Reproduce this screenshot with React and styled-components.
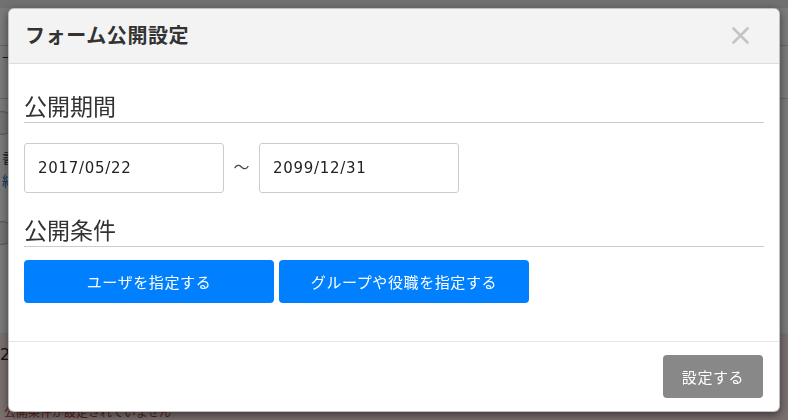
import React from 'react';
import styled, { createGlobalStyle } from 'styled-components';

const GlobalStyle = createGlobalStyle`
  html, body {
    margin: 0;
    padding: 0;
    height: 100%;
    overflow: hidden;
  }
  body {
    font-family: "DejaVu Sans", "Noto Sans CJK JP", sans-serif;
    color: #333;
  }
`;

/* page behind the modal */
const Page = styled.div`
  height: 420px;
  background: #f4f4f4;
  display: flex;
  flex-direction: column;
  overflow: hidden;
`;
const TopBar = styled.div`
  height: 8px;
  background: #e0e0e0;
`;
const PageRow = styled.div`
  height: ${p => p.h}px;
  border-bottom: ${p => (p.line ? '1px solid #c8c8c8' : 'none')};
  display: flex;
  align-items: center;
  padding-left: 2px;
  font-size: 14px;
  color: ${p => p.color || '#333'};
`;
const Circle = styled.span`
  width: 22px;
  height: 22px;
  margin-left: -12px;
  border-radius: 50%;
  border: 1px solid #aaa;
  background: #e6e6e6;
`;
const Alert = styled.div`
  margin-top: auto;
  height: 87px;
  background: #f2dede;
  display: flex;
  flex-direction: column;
  justify-content: space-between;
  font-size: 16px;
  padding: 12px 0 0 0;
  box-sizing: border-box;
`;
const AlertNum = styled.span`
  color: #222;
`;
const AlertText = styled.span`
  color: #c0392b;
  font-size: 12px;
  line-height: 14px;
  height: 14px;
  padding-left: 4px;
`;

/* modal */
const Backdrop = styled.div`
  position: fixed;
  inset: 0;
  background: rgba(0, 0, 0, 0.5);
  padding: 8px;
  display: flex;
  box-sizing: border-box;
`;
const Modal = styled.div`
  flex: 1;
  background: #fff;
  border: 1px solid rgba(0, 0, 0, 0.25);
  border-radius: 6px;
  box-shadow: 0 3px 9px rgba(0, 0, 0, 0.5);
  display: flex;
  flex-direction: column;
  overflow: hidden;
`;
const Header = styled.div`
  height: 55px;
  background: #f3f3f3;
  border-bottom: 1px solid #ddd;
  display: flex;
  align-items: center;
  justify-content: space-between;
  padding: 0 30px 2px 16px;
  box-sizing: border-box;
`;
const Title = styled.h4`
  margin: 0;
  font-family: "Noto Sans CJK JP", sans-serif;
  font-size: 20px;
  line-height: 24px;
  font-weight: 700;
  color: #333;
  letter-spacing: 0.6px;
`;
const Close = styled.button`
  border: none;
  background: none;
  padding: 0;
  width: 17px;
  height: 17px;
  display: flex;
  cursor: pointer;
`;
const Body = styled.div`
  flex: 1;
  padding: 24px 15px 0;
  border-bottom: 1px solid #e5e5e5;
`;
const Heading = styled.h3`
  margin: ${p => p.top || 0}px 0 0;
  font-family: "Noto Sans CJK JP", sans-serif;
  font-size: 23px;
  font-weight: 400;
  line-height: 34px;
  color: #333;
  border-bottom: 1px solid #ccc;
`;
const DateRow = styled.div`
  display: flex;
  align-items: center;
  margin-top: 20px;
`;
const DateInput = styled.input`
  width: 200px;
  height: 50px;
  box-sizing: border-box;
  border: 1px solid #ccc;
  border-radius: 3px;
  padding: 0 13px;
  font-family: "DejaVu Sans", "Noto Sans CJK JP", sans-serif;
  font-size: 15px;
  letter-spacing: 0.7px;
  color: #222;
  background: #fff;
  outline: none;
`;
const Tilde = styled.span`
  width: 35px;
  text-align: center;
  font-family: "Noto Sans CJK JP", sans-serif;
  font-size: 16px;
  color: #444;
  margin-top: -4px;
`;
const ButtonRow = styled.div`
  display: flex;
  gap: 5px;
  margin-top: 13px;
`;
const Button = styled.button`
  width: ${p => p.w || 250}px;
  height: 43px;
  border: none;
  border-radius: 4px;
  background: ${p => p.bg || '#0080ff'};
  color: #fff;
  font-family: "Noto Sans CJK JP", sans-serif;
  font-size: 15px;
  letter-spacing: 0.6px;
  cursor: pointer;
`;
const Footer = styled.div`
  height: 69px;
  padding: 0 16px 0 15px;
  display: flex;
  align-items: center;
  justify-content: flex-end;
`;

const CloseIcon = () => (
  <svg width="17" height="17" viewBox="0 0 17 17">
    <path d="M1.5 1.5 L15.5 15.5 M15.5 1.5 L1.5 15.5" stroke="#c4c4c4" strokeWidth="2.6" strokeLinecap="round" />
  </svg>
);

const App = () => {
  return (
    <>
      <GlobalStyle />
      <Page>
        <TopBar />
        <PageRow h={37} line />
        <PageRow h={22}>十</PageRow>
        <PageRow h={30} line />
        <PageRow h={48}><Circle /></PageRow>
        <PageRow h={20}>書</PageRow>
        <PageRow h={26} color="#2a6ebb">紺</PageRow>
        <PageRow h={80}><Circle /></PageRow>
        <Alert>
          <AlertNum>2</AlertNum>
          <AlertText>公開条件が設定されていません</AlertText>
        </Alert>
      </Page>
      <Backdrop>
        <Modal>
          <Header>
            <Title>フォーム公開設定</Title>
            <Close aria-label="close"><CloseIcon /></Close>
          </Header>
          <Body>
            <Heading>公開期間</Heading>
            <DateRow>
              <DateInput defaultValue="2017/05/22" />
              <Tilde>〜</Tilde>
              <DateInput defaultValue="2099/12/31" />
            </DateRow>
            <Heading top={19}>公開条件</Heading>
            <ButtonRow>
              <Button>ユーザを指定する</Button>
              <Button>グループや役職を指定する</Button>
            </ButtonRow>
          </Body>
          <Footer>
            <Button w={100} bg="#888">設定する</Button>
          </Footer>
        </Modal>
      </Backdrop>
    </>
  );
};

export default App;
